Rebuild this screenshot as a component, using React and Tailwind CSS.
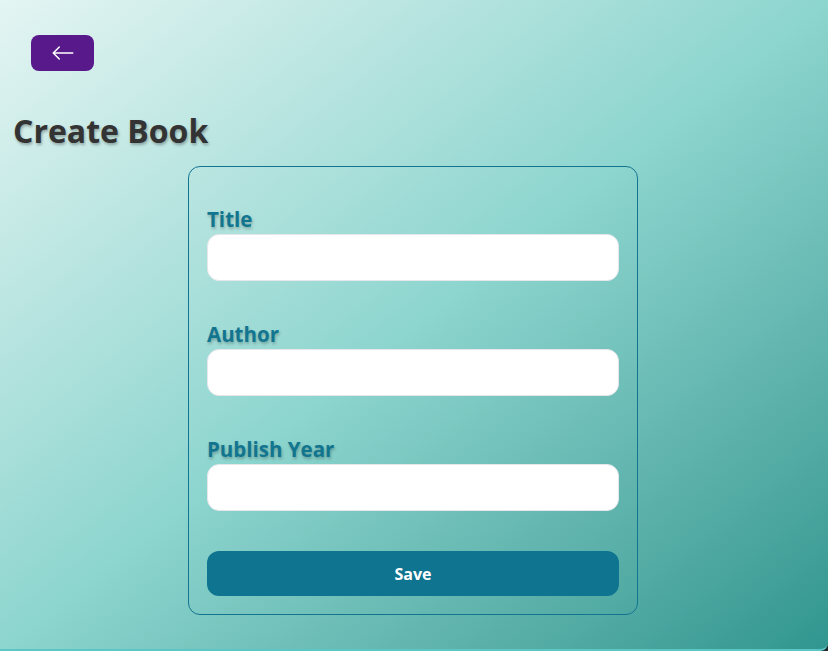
import { BsArrowLeft } from "react-icons/bs";

function Field({ label }) {
  return (
    <div className="mb-10">
      <label className="block text-[20.5px] font-bold text-[#12758f] [text-shadow:1px_2px_3px_rgba(0,0,0,0.25)] leading-[26px] mb-[2px]">
        {label}
      </label>
      <input
        type="text"
        className="w-full h-[47px] px-4 bg-white border border-gray-200 rounded-xl focus:outline-none"
      />
    </div>
  );
}

export default function App() {
  return (
    <div className="w-full bg-[#1f2a2a] font-['Open_Sans',sans-serif]">
      <div className="h-[651px] rounded-br-lg bg-gradient-to-br from-[#e4f5f3] via-[#8dd5cf] to-[#2f968f] px-[13px] pt-[35px] border-b-2 border-[#5cc6c4]">
        <div className="pl-[18px]">
          <button className="w-[63px] h-9 flex items-center justify-center bg-[#58198b] rounded-lg text-white">
            <BsArrowLeft className="text-2xl" />
          </button>
        </div>

        <h1 className="mt-[40px] text-[32px] leading-[40px] font-bold text-[#333] [text-shadow:1px_2px_3px_rgba(0,0,0,0.3)]">
          Create Book
        </h1>

        <form className="w-[450px] ml-[175px] mt-[15px] border border-[#137490] rounded-xl px-[18px] pt-[39px] pb-[18px]">
          <Field label="Title" />
          <Field label="Author" />
          <Field label="Publish Year" />
          <button
            type="button"
            className="w-full h-[45px] bg-[#0f7490] text-white font-bold rounded-xl"
          >
            Save
          </button>
        </form>
      </div>
    </div>
  );
}
